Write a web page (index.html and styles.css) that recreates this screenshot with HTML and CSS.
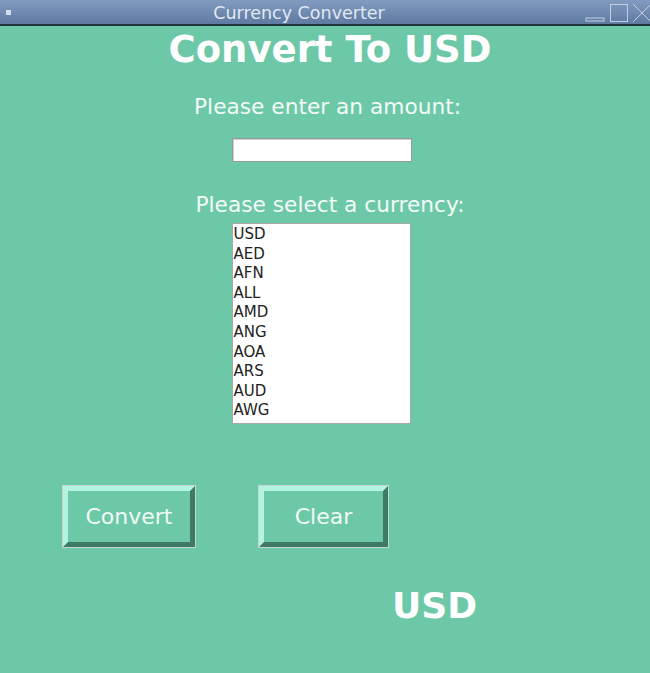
FILE: index.html
```html
<!DOCTYPE html>
<html>
<head>
<meta charset="utf-8">
<link rel="stylesheet" href="styles.css">
</head>
<body>
<div class="window">
  <div class="titlebar">
    <span class="app-icon"></span>
    <span class="title">Currency Converter</span>
    <div class="controls">
      <svg width="70" height="22" viewBox="0 0 70 22">
        <rect x="6" y="17" width="18" height="3" fill="none" stroke="#c4d0e2" stroke-width="1"/>
        <rect x="30.5" y="3.5" width="17" height="17" fill="none" stroke="#c4d0e2" stroke-width="1"/>
        <path d="M53 3 L71 21 M71 3 L53 21" stroke="#c4d0e2" stroke-width="1" fill="none"/>
      </svg>
    </div>
  </div>
  <div class="content">
    <h1 class="heading">Convert To USD</h1>
    <p class="label label-amount">Please enter an amount:</p>
    <div class="entry"></div>
    <p class="label label-currency">Please select a currency:</p>
    <div class="listbox">
      <div class="item">USD</div>
      <div class="item">AED</div>
      <div class="item">AFN</div>
      <div class="item">ALL</div>
      <div class="item">AMD</div>
      <div class="item">ANG</div>
      <div class="item">AOA</div>
      <div class="item">ARS</div>
      <div class="item">AUD</div>
      <div class="item">AWG</div>
    </div>
    <div class="buttons">
      <div class="btn btn-convert"><span class="btn-inner">Convert</span></div>
      <div class="btn btn-clear"><span class="btn-inner">Clear</span></div>
    </div>
    <div class="result">USD</div>
  </div>
</div>
</body>
</html>
```
FILE: styles.css
```css
html, body {
  margin: 0;
  padding: 0;
  background: #6dc8a8;
  font-family: "DejaVu Sans", sans-serif;
}
.window {
  width: 650px;
  height: 673px;
  overflow: hidden;
}
.titlebar {
  height: 24px;
  background: linear-gradient(#819bc0, #5f7aa1);
  border-bottom: 2px solid #25323f;
  position: relative;
  display: flex;
  align-items: center;
  justify-content: center;
}
.app-icon {
  position: absolute;
  left: 6px;
  top: 10px;
  width: 5px;
  height: 5px;
  background: #d6dcea;
}
.title {
  color: #e2e8f2;
  font-size: 17.5px;
  margin-left: -52px;
  margin-top: 2px;
}
.controls {
  position: absolute;
  right: 0;
  top: 1px;
  height: 22px;
}
.controls svg {
  display: block;
}
.content {
  display: flex;
  flex-direction: column;
  align-items: center;
}
.heading {
  margin: 2px 0 0 10px;
  font-size: 37px;
  font-weight: bold;
  color: #ffffff;
  line-height: 44px;
}
.label {
  margin: 0;
  color: #f2fbf7;
  font-size: 21.7px;
  line-height: 26px;
}
.label-amount {
  margin-top: 22px;
  margin-left: 5px;
}
.entry {
  margin-top: 18px;
  width: 178px;
  height: 22px;
  background: #ffffff;
  border: 1px solid #9a9a9a;
  box-shadow: inset 1px 1px 0 #d0d0d0;
  margin-left: -6px;
}
.label-currency {
  margin-top: 30px;
  margin-left: 10px;
}
.listbox {
  margin-top: 5px;
  width: 177px;
  height: 198px;
  background: #ffffff;
  border: 1px solid #a8a8a8;
  margin-left: -8px;
  padding-top: 1px;
  box-sizing: content-box;
}
.item {
  font-size: 15px;
  line-height: 19.6px;
  color: #222222;
  padding-left: 1px;
}
.buttons {
  align-self: flex-start;
  display: flex;
  gap: 62px;
  margin-top: 61px;
  margin-left: 62px;
}
.btn {
  border: 1px solid #c6d6cf;
  display: flex;
}
.btn-inner {
  display: flex;
  align-items: center;
  justify-content: center;
  border-style: solid;
  border-width: 5px;
  border-color: #b3f3e2 #3e7a66 #3e7a66 #b3f3e2;
  background: #6dc8a8;
  color: #f0fbf6;
  font-size: 22px;
}
.btn-convert .btn-inner {
  width: 122px;
  height: 51px;
}
.btn-clear .btn-inner {
  width: 119px;
  height: 51px;
}
.result {
  align-self: flex-start;
  margin-left: 392px;
  margin-top: 36px;
  font-size: 36px;
  font-weight: bold;
  color: #ffffff;
  line-height: 44px;
}
```
